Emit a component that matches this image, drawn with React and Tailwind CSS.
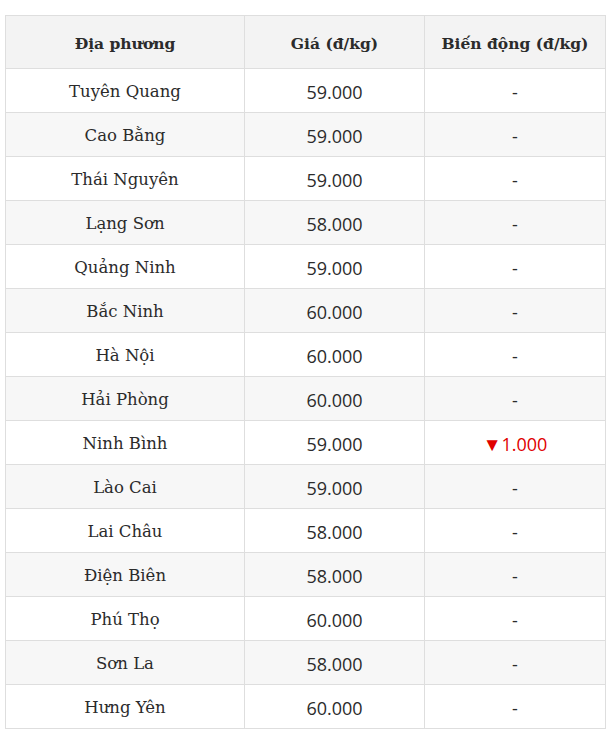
import React from 'react';

const rows = [
  ['Tuyên Quang', '59.000', '-'],
  ['Cao Bằng', '59.000', '-'],
  ['Thái Nguyên', '59.000', '-'],
  ['Lạng Sơn', '58.000', '-'],
  ['Quảng Ninh', '59.000', '-'],
  ['Bắc Ninh', '60.000', '-'],
  ['Hà Nội', '60.000', '-'],
  ['Hải Phòng', '60.000', '-'],
  ['Ninh Bình', '59.000', 'down'],
  ['Lào Cai', '59.000', '-'],
  ['Lai Châu', '58.000', '-'],
  ['Điện Biên', '58.000', '-'],
  ['Phú Thọ', '60.000', '-'],
  ['Sơn La', '58.000', '-'],
  ['Hưng Yên', '60.000', '-'],
];

const serif = "font-['DejaVu_Serif',serif]";
const sans = "font-['Open_Sans',sans-serif]";

export default function App() {
  return (
    <div className="w-[610px] h-[738px] bg-white pt-[15px] px-[5px]">
      <table className="w-[600px] border-collapse text-[#2b2b2b] table-fixed">
        <colgroup>
          <col className="w-[239px]" />
          <col className="w-[180px]" />
          <col className="w-[181px]" />
        </colgroup>
        <thead>
          <tr className="h-[53px] bg-[#f3f3f3]">
            <th className={`border border-[#dedede] pt-[3px] text-[15.5px] font-bold ${serif}`}>Địa phương</th>
            <th className={`border border-[#dedede] pt-[3px] text-[15.5px] font-bold ${serif}`}>Giá (đ/kg)</th>
            <th className={`border border-[#dedede] pt-[3px] text-[15.5px] font-bold ${serif}`}>Biến động (đ/kg)</th>
          </tr>
        </thead>
        <tbody>
          {rows.map(([name, price, change], i) => (
            <tr key={name} className={`h-[44px] ${i % 2 === 1 ? 'bg-[#f7f7f7]' : 'bg-white'}`}>
              <td className={`border border-[#dedede] pt-[3px] text-center text-[16.5px] ${serif}`}>{name}</td>
              <td className={`border border-[#dedede] pt-[3px] text-center text-[18px] ${sans}`}>{price}</td>
              <td className={`border border-[#dedede] pt-[3px] text-center text-[18px] ${sans}`}>
                {change === 'down' ? (
                  <span className="text-[#e00000]">
                    <span className="text-[19px]">▼</span>1.000
                  </span>
                ) : (
                  change
                )}
              </td>
            </tr>
          ))}
        </tbody>
      </table>
    </div>
  );
}
